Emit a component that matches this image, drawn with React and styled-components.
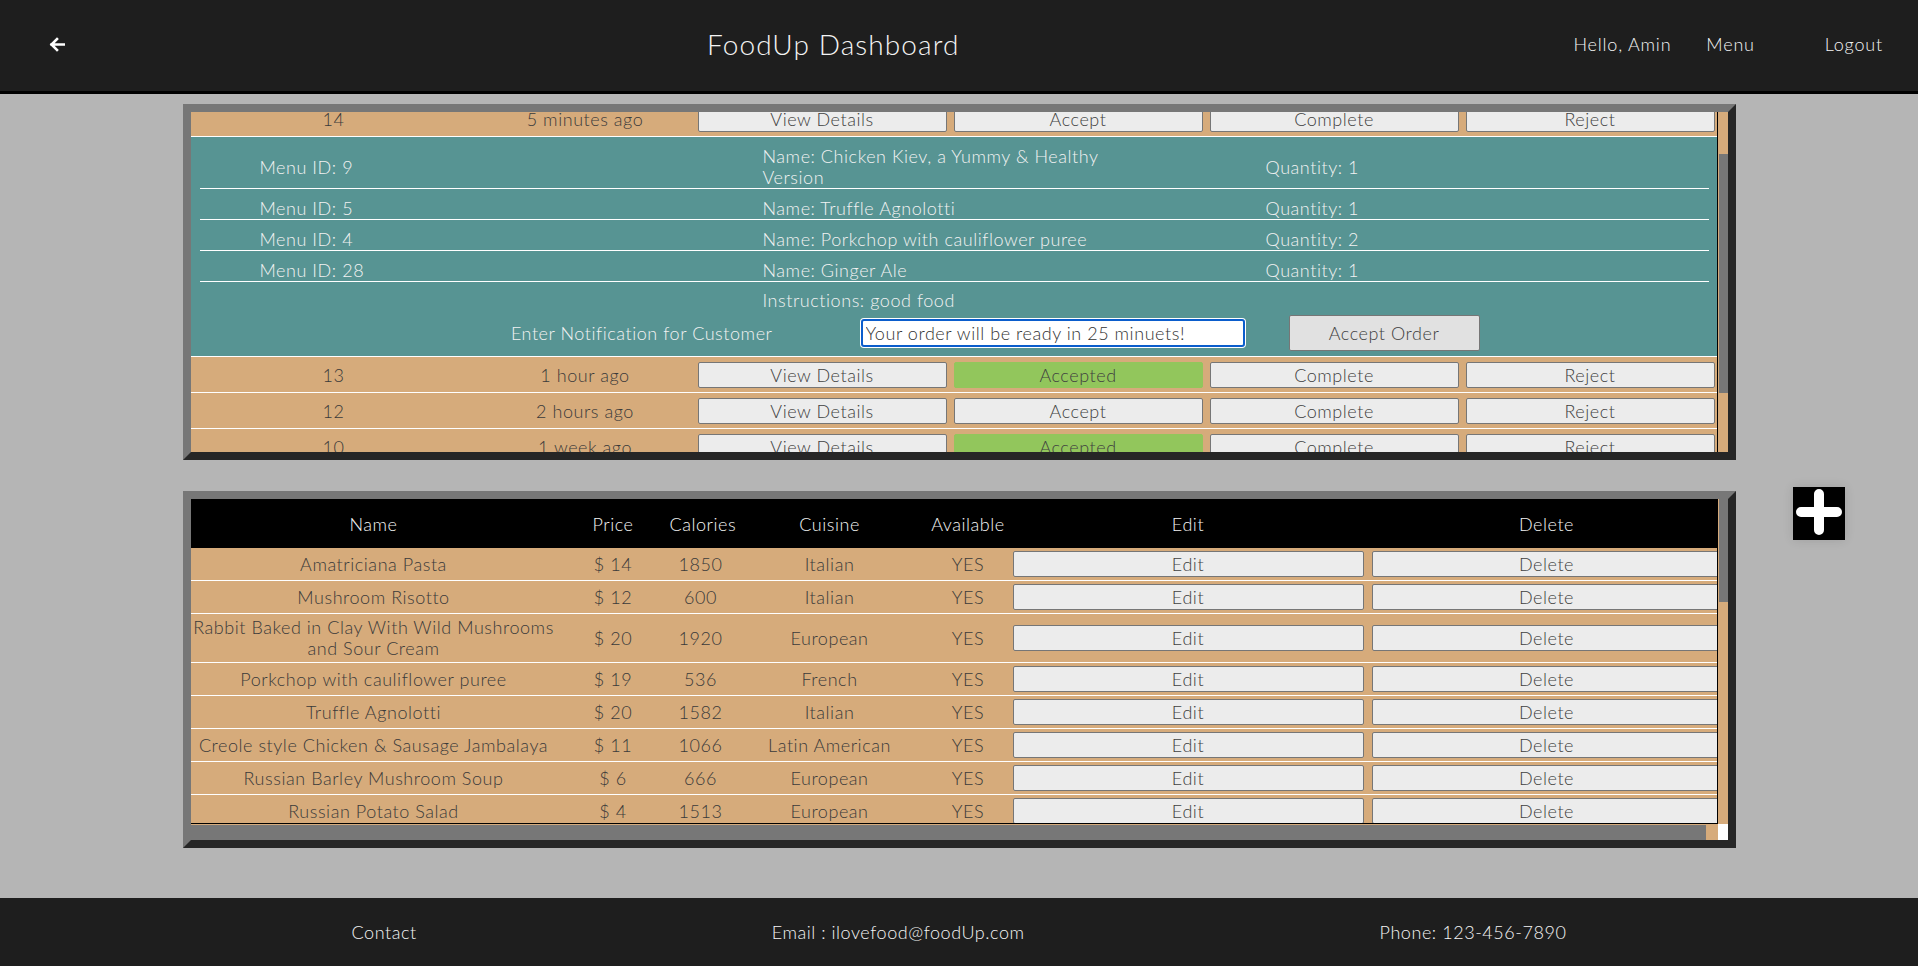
import React, { useLayoutEffect, useRef } from "react";
import styled, { createGlobalStyle } from "styled-components";

const GlobalStyle = createGlobalStyle`
  html, body {
    margin: 0;
    padding: 0;
    background: #b5b5b5;
    font-family: Lato, Inter, "Liberation Sans", sans-serif;
    font-weight: 300;
    letter-spacing: 0.55px;
  }
  * { box-sizing: border-box; }
`;

const TAN = "#d6ab7b";
const TEAL = "#579493";

const Page = styled.div`
  min-height: 100vh;
  display: flex;
  flex-direction: column;
`;

const Header = styled.header`
  height: 94px;
  background: #1e1e1e;
  border-bottom: 3px solid #000;
  display: flex;
  align-items: center;
  padding: 0 35px 4px 49px;
  color: #f4f4f4;
`;

const BackButton = styled.button`
  display: flex;
  padding: 0;
  margin-top: 2px;
  border: 0;
  background: none;
  cursor: pointer;
`;

const Title = styled.h1`
  margin: 0 0 0 642px;
  font-size: 28px;
  font-weight: 300;
  letter-spacing: 1.1px;
`;

const Nav = styled.nav`
  margin-left: auto;
  display: flex;
  align-items: center;
`;

const NavLink = styled.a`
  margin-left: ${(p) => p.$gap || 0}px;
  font-size: 18px;
  letter-spacing: 0.8px;
  color: #f4f4f4;
  cursor: pointer;
`;

const Main = styled.main`
  display: flex;
  flex-direction: column;
  align-items: center;
  gap: 31px;
  padding-top: 10px;
`;

const Panel = styled.section`
  width: 1553px;
  border: 8px solid;
  border-color: #777 #262626 #262626 #777;
  display: grid;
  grid-template-columns: 1fr 10px;
  grid-template-rows: ${(p) => p.$rows};
`;

const Viewport = styled.div`
  overflow: hidden;
  background: ${TAN};
  border-right: 1px solid #000;
  border-bottom: ${(p) => (p.$ruled ? "1px solid #000" : "none")};
`;

const VTrack = styled.div`
  position: relative;
  background: ${TAN};
`;

const HTrack = styled.div`
  position: relative;
  background: ${TAN};
`;

const Thumb = styled.div`
  position: absolute;
  background: #777;
`;

const Corner = styled.div`
  background: #fff;
`;

const HeadRow = styled.div`
  display: grid;
  grid-template-columns: ${(p) => p.$cols};
  align-items: center;
  height: 49px;
  background: #000;
  color: #f4f4f4;
  font-size: 18px;
  text-align: center;
`;

const OrderRow = styled.div`
  display: grid;
  grid-template-columns: 286px 217px repeat(4, 256px);
  align-items: center;
  height: 36px;
  background: ${TAN};
  border-bottom: 1px solid #fff;
  color: #3a3a3a;
  font-size: 18px;
  text-align: center;
`;

const RowButton = styled.button`
  height: 26px;
  margin: 0 3px 0 4px;
  background: ${(p) => (p.$accepted ? "#92c65c" : "#ececec")};
  border: 1px solid ${(p) => (p.$accepted ? "#92c65c" : "#767676")};
  border-radius: 2px;
  font-family: inherit;
  font-weight: 300;
  letter-spacing: inherit;
  font-size: 18px;
  color: #404040;
  cursor: pointer;
`;

const Details = styled.div`
  background: ${TEAL};
  padding: 0 8px 5px 9px;
  border-bottom: 1px solid #fff;
  color: #f2f2f2;
  font-size: 18px;
  line-height: 21px;
`;

const ItemLine = styled.div`
  display: grid;
  grid-template-columns: repeat(3, 1fr);
  align-items: center;
  padding-top: ${(p) => (p.$plain ? 8 : 9)}px;
  border-bottom: ${(p) => (p.$plain ? "none" : "1px solid #fff")};
`;

const ItemCell = styled.div`
  padding: 0 60px;
`;

const NotifyRow = styled.div`
  display: grid;
  grid-template-columns: 661px 384px auto;
  align-items: center;
  margin-top: 4px;
`;

const NotifyLabel = styled.label`
  text-align: right;
  padding-right: 88px;
`;

const NotifyInput = styled.input`
  width: 384px;
  height: 28px;
  padding: 0 3px;
  border: 2px solid #0b5dcc;
  border-radius: 3px;
  box-shadow: 0 0 0 1px #fff;
  outline: none;
  font-family: inherit;
  font-weight: 300;
  letter-spacing: inherit;
  font-size: 18px;
  color: #333;
`;

const AcceptOrder = styled.button`
  width: 191px;
  height: 36px;
  margin-left: 44px;
  background: #e1e1e1;
  border: 1px solid #767676;
  border-radius: 2px;
  font-family: inherit;
  font-weight: 300;
  letter-spacing: inherit;
  font-size: 18px;
  color: #404040;
  cursor: pointer;
`;

const MENU_COLS = "366px 113px 62px 196px 81px 359px 358px";
const MENU_WIDTH = 1535;

const MenuTable = styled.div`
  width: ${MENU_WIDTH}px;
`;

const MenuRow = styled.div`
  display: grid;
  grid-template-columns: ${MENU_COLS};
  align-items: center;
  min-height: 33px;
  padding: 3px 0;
  background: ${TAN};
  border-bottom: 1px solid #fff;
  color: #3a3a3a;
  font-size: 18px;
  line-height: 21px;
  text-align: center;
`;

const MenuButton = styled.button`
  height: 26px;
  margin: 0 4px;
  background: #ececec;
  border: 1px solid #767676;
  border-radius: 2px;
  font-family: inherit;
  font-weight: 300;
  letter-spacing: inherit;
  font-size: 18px;
  color: #404040;
  cursor: pointer;
`;

const MenuArea = styled.div`
  display: grid;
  grid-template-columns: 1fr 1553px 1fr;
  width: 100%;
`;

const AddButton = styled.button`
  grid-column: 3;
  align-self: start;
  width: 52px;
  height: 53px;
  margin: -4px 0 0 57px;
  padding: 0;
  background: #000;
  border: 0;
  box-shadow: 0 0 10px rgba(0, 0, 0, 0.12);
  cursor: pointer;
  display: flex;
`;

const Footer = styled.footer`
  margin-top: auto;
  height: 68px;
  background: #1e1e1e;
  display: flex;
  align-items: center;
  justify-content: space-around;
  padding: 0 174px;
  color: #f4f4f4;
  font-size: 18px;
`;

const orders = [
  { id: 14, time: "5 minutes ago", accepted: false, open: true },
  { id: 13, time: "1 hour ago", accepted: true },
  { id: 12, time: "2 hours ago", accepted: false },
  { id: 10, time: "1 week ago", accepted: true },
  { id: 9, time: "1 week ago", accepted: true },
  { id: 7, time: "2 weeks ago", accepted: true },
];

const orderItems = [
  { menuId: 9, name: "Name: Chicken Kiev, a Yummy & Healthy Version", qty: 1 },
  { menuId: 5, name: "Name: Truffle Agnolotti", qty: 1 },
  { menuId: 4, name: "Name: Porkchop with cauliflower puree", qty: 2 },
  { menuId: 28, name: "Name: Ginger Ale", qty: 1 },
];

const menu = [
  ["Amatriciana Pasta", 14, 1850, "Italian"],
  ["Mushroom Risotto", 12, 600, "Italian"],
  ["Rabbit Baked in Clay With Wild Mushrooms and Sour Cream", 20, 1920, "European"],
  ["Porkchop with cauliflower puree", 19, 536, "French"],
  ["Truffle Agnolotti", 20, 1582, "Italian"],
  ["Creole style Chicken & Sausage Jambalaya", 11, 1066, "Latin American"],
  ["Russian Barley Mushroom Soup", 6, 666, "European"],
  ["Russian Potato Salad", 4, 1513, "European"],
  ["Chicken Kiev, a Yummy & Healthy Version", 16, 980, "European"],
  ["Beef Stroganoff", 18, 1240, "European"],
  ["Margherita Pizza", 13, 1100, "Italian"],
  ["Pad Thai", 12, 890, "Asian"],
  ["Chicken Tikka Masala", 15, 1320, "Indian"],
  ["Caesar Salad", 9, 470, "American"],
  ["Fish Tacos", 11, 720, "Latin American"],
  ["Ramen", 13, 950, "Asian"],
  ["Ratatouille", 12, 410, "French"],
  ["Lasagna", 16, 1450, "Italian"],
  ["Borscht", 7, 380, "European"],
  ["Beef Burger", 12, 1180, "American"],
  ["Paella", 21, 1290, "European"],
  ["Tiramisu", 8, 520, "Italian"],
  ["Creme Brulee", 8, 560, "French"],
  ["Cheesecake", 7, 610, "American"],
  ["Lemonade", 3, 150, "American"],
  ["Iced Tea", 3, 90, "American"],
  ["Ginger Ale", 3, 140, "American"],
  ["Espresso", 3, 5, "Italian"],
];

// scroll state shown in the screenshot
const ORDERS_VIEW = 340;
const ORDERS_CONTENT = 484;
const ORDERS_SCROLL = 60;
const MENU_VIEW = 324;
const MENU_CONTENT = 1019;
const MENU_VIEW_W = 1527;

const ArrowLeft = () => (
  <svg width="16" height="15" viewBox="0 0 16 15" fill="none">
    <path d="M15 7.5H2.5M8 2L2.5 7.5L8 13" stroke="#fff" strokeWidth="2.6" strokeLinecap="square" />
  </svg>
);

const PlusIcon = () => (
  <svg width="52" height="53" viewBox="0 0 52 53">
    <path d="M26 7V43M8 25H44" stroke="#fff" strokeWidth="10" strokeLinecap="round" />
  </svg>
);

const OrderDetails = () => (
  <Details>
    {orderItems.map((item) => (
      <ItemLine key={item.menuId}>
        <ItemCell>Menu ID: {item.menuId}</ItemCell>
        <ItemCell>{item.name}</ItemCell>
        <ItemCell>Quantity: {item.qty}</ItemCell>
      </ItemLine>
    ))}
    <ItemLine $plain>
      <ItemCell />
      <ItemCell>Instructions: good food</ItemCell>
      <ItemCell />
    </ItemLine>
    <NotifyRow>
      <NotifyLabel>Enter Notification for Customer</NotifyLabel>
      <NotifyInput defaultValue="Your order will be ready in 25 minuets!" />
      <div>
        <AcceptOrder>Accept Order</AcceptOrder>
      </div>
    </NotifyRow>
  </Details>
);

const App = () => {
  const ordersRef = useRef(null);

  useLayoutEffect(() => {
    if (ordersRef.current) ordersRef.current.scrollTop = ORDERS_SCROLL;
  }, []);

  const ordersThumb = {
    top: (ORDERS_SCROLL / ORDERS_CONTENT) * ORDERS_VIEW,
    height: (ORDERS_VIEW / ORDERS_CONTENT) * ORDERS_VIEW,
    left: 1,
    right: 0,
  };
  const menuThumb = {
    top: 0,
    height: (MENU_VIEW / MENU_CONTENT) * MENU_VIEW,
    left: 1,
    right: 0,
  };
  const menuHThumb = {
    left: 0,
    width: (MENU_VIEW_W / MENU_WIDTH) * MENU_VIEW_W - 4,
    top: 1,
    bottom: 0,
  };

  return (
    <Page>
      <GlobalStyle />
      <Header>
        <BackButton aria-label="Back">
          <ArrowLeft />
        </BackButton>
        <Title>FoodUp Dashboard</Title>
        <Nav>
          <NavLink>Hello, Amin</NavLink>
          <NavLink $gap={35}>Menu</NavLink>
          <NavLink $gap={70}>Logout</NavLink>
        </Nav>
      </Header>

      <Main>
        <Panel $rows={`${ORDERS_VIEW}px`}>
          <Viewport ref={ordersRef}>
            <HeadRow $cols="286px 217px repeat(4, 256px)">
              <div>Order ID</div>
              <div>Time</div>
              <div>Details</div>
              <div>Accept</div>
              <div>Complete</div>
              <div>Reject</div>
            </HeadRow>
            {orders.map((o) => (
              <React.Fragment key={o.id}>
                <OrderRow>
                  <div>{o.id}</div>
                  <div>{o.time}</div>
                  <RowButton>View Details</RowButton>
                  <RowButton $accepted={o.accepted}>{o.accepted ? "Accepted" : "Accept"}</RowButton>
                  <RowButton>Complete</RowButton>
                  <RowButton>Reject</RowButton>
                </OrderRow>
                {o.open && <OrderDetails />}
              </React.Fragment>
            ))}
          </Viewport>
          <VTrack>
            <Thumb style={ordersThumb} />
          </VTrack>
        </Panel>

        <MenuArea>
          <Panel $rows={`${MENU_VIEW + 1}px 16px`} style={{ gridColumn: 2 }}>
            <Viewport $ruled>
              <MenuTable>
                <HeadRow $cols={MENU_COLS}>
                  <div>Name</div>
                  <div>Price</div>
                  <div>Calories</div>
                  <div>Cuisine</div>
                  <div>Available</div>
                  <div>Edit</div>
                  <div>Delete</div>
                </HeadRow>
                {menu.map(([name, price, cal, cuisine]) => (
                  <MenuRow key={name}>
                    <div>{name}</div>
                    <div>$ {price}</div>
                    <div>{cal}</div>
                    <div>{cuisine}</div>
                    <div>YES</div>
                    <MenuButton>Edit</MenuButton>
                    <MenuButton>Delete</MenuButton>
                  </MenuRow>
                ))}
              </MenuTable>
            </Viewport>
            <VTrack>
              <Thumb style={menuThumb} />
            </VTrack>
            <HTrack>
              <Thumb style={menuHThumb} />
            </HTrack>
            <Corner />
          </Panel>
          <AddButton aria-label="Add menu item">
            <PlusIcon />
          </AddButton>
        </MenuArea>
      </Main>

      <Footer>
        <span>Contact</span>
        <span>Email : ilovefood@foodUp.com</span>
        <span>Phone: 123-456-7890</span>
      </Footer>
    </Page>
  );
};

export default App;
